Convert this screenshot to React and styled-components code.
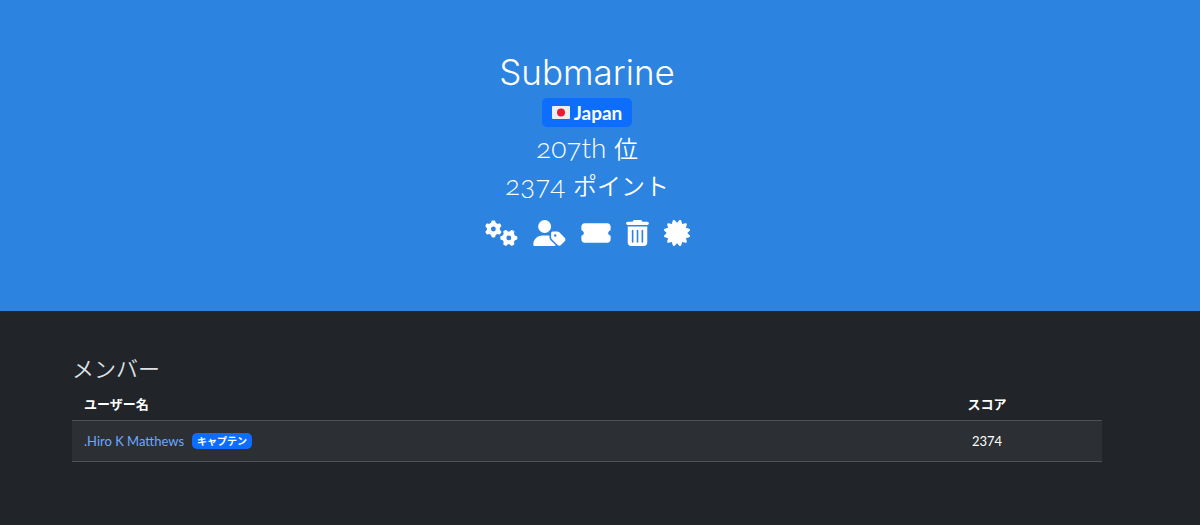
import React from 'react';
import styled, { createGlobalStyle, css } from 'styled-components';
import {
    FaGears,
    FaUserTag,
    FaTicketSimple,
    FaTrashCan,
    FaCertificate,
} from 'react-icons/fa6';

const GlobalStyle = createGlobalStyle`
    *, *::before, *::after {
        box-sizing: border-box;
    }
    body {
        margin: 0;
        background: #212529;
        color: #dee2e6;
        font-family: Lato, 'Noto Sans CJK JP', sans-serif;
        font-size: 13px;
        line-height: 20px;
    }
`;

const Gutter = css`
    padding-left: 72px;
    padding-right: 98px;
`;

const Jumbotron = styled.header`
    ${Gutter}
    display: flex;
    flex-direction: column;
    align-items: center;
    padding-top: 52px;
    padding-bottom: 65px;
    background: #2c83e0;
    color: #fff;
`;

const TeamName = styled.h1`
    margin: 0;
    font-family: Inter, 'Noto Sans CJK JP', sans-serif;
    font-size: 35px;
    font-weight: 300;
    line-height: 40px;
`;

const CountryBadge = styled.span`
    display: flex;
    align-items: center;
    gap: 4px;
    height: 29px;
    margin: 6px 0 2px;
    padding: 0 10px;
    border-radius: 5px;
    background: #0d6efd;
    font-size: 19px;
    font-weight: 700;
`;

const Stat = styled.h2`
    margin: 0;
    font-variant-numeric: oldstyle-nums;
    font-size: 28px;
    font-weight: 300;
    line-height: 37px;
`;

const Unit = styled.span`
    font-size: 24px;
    font-weight: 350;
    line-height: 24px;
`;

const Actions = styled.nav`
    display: flex;
    align-items: center;
    gap: 15px;
    margin-top: 17px;
`;

const ActionLink = styled.a`
    display: flex;
    color: #fff;

    svg {
        width: ${({ $width }) => $width}px;
        height: 26px;
    }
`;

const Members = styled.main`
    ${Gutter}
    padding-top: 42px;
    padding-bottom: 62px;
`;

const SectionTitle = styled.h3`
    margin: 0;
    font-size: 22px;
    font-weight: 350;
    line-height: 32px;
`;

const Table = styled.table`
    width: 100%;
    margin-top: 4px;
    border-collapse: collapse;
`;

const HeadCell = styled.th`
    height: 31px;
    width: ${({ $score }) => ($score ? '230px' : 'auto')};
    padding: 0 12px;
    color: #fff;
    text-align: ${({ $score }) => ($score ? 'center' : 'left')};
`;

const Row = styled.tr`
    border-top: 1px solid #4d5154;
    border-bottom: 1px solid #4d5154;
    background: #2c3034;
    color: #fff;
`;

const Cell = styled.td`
    height: 41px;
    padding: 0 12px;
    text-align: ${({ $score }) => ($score ? 'center' : 'left')};
`;

const MemberCell = styled.div`
    display: flex;
    align-items: center;
    gap: 8px;
`;

const MemberLink = styled.a`
    color: #6ea8fe;
    text-decoration: none;
`;

const RoleBadge = styled.span`
    height: 16px;
    padding: 0 5px;
    border-radius: 5px;
    background: #0d6efd;
    font-size: 10px;
    font-weight: 700;
    line-height: 16px;
`;

const actions = [
    { label: '設定', Icon: FaGears, width: 33 },
    { label: 'キャプテン', Icon: FaUserTag, width: 33 },
    { label: '招待', Icon: FaTicketSimple, width: 30 },
    { label: '削除', Icon: FaTrashCan, width: 23 },
    { label: '証明書', Icon: FaCertificate, width: 26 },
];

const members = [{ name: '.Hiro K Matthews', captain: true, score: 2374 }];

const JapanFlag = () => (
    <svg width="18" height="13" viewBox="0 0 18 13" aria-hidden="true">
        <rect width="18" height="13" rx="1" fill="#eee" />
        <circle cx="9" cy="6.5" r="4" fill="#ed1b2f" />
    </svg>
);

const App = () => (
    <>
        <GlobalStyle />
        <Jumbotron>
            <TeamName>Submarine</TeamName>
            <CountryBadge>
                <JapanFlag />
                Japan
            </CountryBadge>
            <Stat>
                207th <Unit>位</Unit>
            </Stat>
            <Stat>
                2374 <Unit>ポイント</Unit>
            </Stat>
            <Actions>
                {actions.map(({ label, Icon, width }) => (
                    <ActionLink
                        key={label}
                        href="#"
                        aria-label={label}
                        $width={width}
                    >
                        <Icon />
                    </ActionLink>
                ))}
            </Actions>
        </Jumbotron>
        <Members>
            <SectionTitle>メンバー</SectionTitle>
            <Table>
                <thead>
                    <tr>
                        <HeadCell scope="col">ユーザー名</HeadCell>
                        <HeadCell scope="col" $score>
                            スコア
                        </HeadCell>
                    </tr>
                </thead>
                <tbody>
                    {members.map(({ name, captain, score }) => (
                        <Row key={name}>
                            <Cell>
                                <MemberCell>
                                    <MemberLink href="#">{name}</MemberLink>
                                    {captain && (
                                        <RoleBadge>キャプテン</RoleBadge>
                                    )}
                                </MemberCell>
                            </Cell>
                            <Cell $score>{score}</Cell>
                        </Row>
                    ))}
                </tbody>
            </Table>
        </Members>
    </>
);

export default App;
